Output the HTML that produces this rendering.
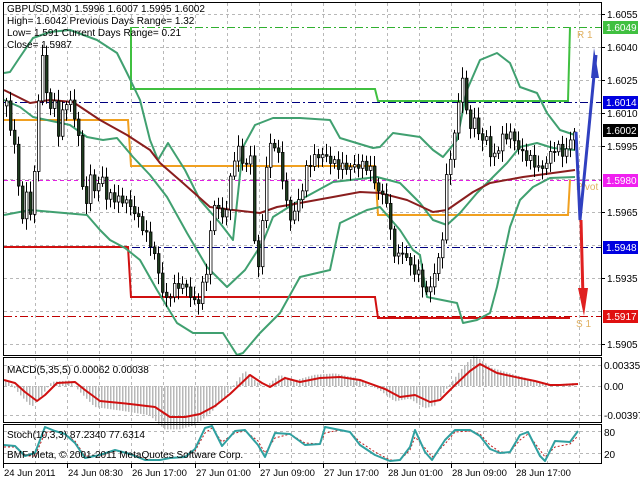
<!DOCTYPE html>
<html><head><meta charset="utf-8"><style>
html,body{margin:0;padding:0;background:#fff;width:640px;height:480px;overflow:hidden}
svg{display:block;font-family:"Liberation Sans",sans-serif;font-size:10px}
</style></head><body>
<svg id="s" width="640" height="480" xmlns="http://www.w3.org/2000/svg">
<rect width="640" height="480" fill="#fff"/>
<g id="grid" stroke="#b8b8b8" stroke-dasharray="3,3" stroke-width="1"></g>
<g id="lv"></g>
<g fill="none" stroke-width="2" stroke-linejoin="round">
<polyline stroke="#40a070" points="4,73 10,72 20,57 33,38 50,32 70,30 97,40 117,53 127,73 140,100 150,140 158,160 168,143 185,170 200,200 220,223 233,240 243,147 255,125 273,118 300,118 330,120 340,138 373,148 380,147 393,133 420,137 433,150 443,157 457,140 467,90 480,60 497,53 510,63 520,87 537,93 547,113 560,130 575,135"/>
<polyline stroke="#40a070" points="4,100 20,107 33,117 47,120 70,125 87,137 103,140 117,138 133,157 150,175 167,197 187,233 207,267 227,287 245,270 263,242 273,217 300,200 333,182 377,177 400,183 420,203 433,220 447,225 460,213 477,193 490,180 507,163 520,147 537,143 553,148 575,150"/>
<polyline stroke="#40a070" points="4,215 30,210 87,215 100,230 110,240 125,248 140,260 157,290 177,323 193,333 223,333 237,355 243,353 260,333 280,313 300,277 330,270 340,223 367,210 380,207 400,230 413,250 420,255 427,297 457,303 463,323 477,320 490,313 497,287 510,227 520,200 533,187 550,178 575,177"/>
<polyline stroke="#8a1e1e" points="4,90 30,103 50,100 73,102 100,120 127,135 150,150 160,163 183,183 210,207 233,210 260,213 277,207 300,203 333,197 360,192 380,193 407,200 433,212 447,210 473,192 490,183 523,177 553,173 575,170"/>
</g>
<g id="cd"></g>
<g id="ar"></g>
<g id="mac"></g>
<g fill="none" stroke-linejoin="round">
<polyline stroke="#d01010" stroke-width="2" points="4,380 15,383 25,392 37,401 45,395 57,383 75,382 85,390 100,401 130,404 155,407 170,417 185,417 200,414 215,406 230,394 250,375 262,383 270,387 285,378 300,382 320,378 340,377 360,380 385,389 400,397 415,395 430,402 440,400 455,385 470,371 480,364 497,373 520,378 535,381 550,385 560,385 578,384"/>
<polyline stroke="#c02020" stroke-dasharray="2,2" points="4,447 15,447 25,456 35,456 45,433 55,431 65,434 75,441 85,456 100,456 115,451 130,453 145,459 160,460 170,458 185,457 195,451 205,433 212,428 222,442 235,433 245,431 258,441 265,453 275,438 290,434 305,443 320,444 325,433 340,430 350,432 360,442 375,452 390,460 400,460 410,450 415,437 425,448 432,457 445,444 455,432 470,431 480,434 490,445 500,452 510,452 520,440 528,434 540,450 545,457 555,447 570,444 578,436"/>
<polyline stroke="#30a0a0" stroke-width="2" points="4,445 15,446 25,456 35,453 45,427 55,431 65,434 75,443 85,458 100,455 115,450 130,454 145,460 160,460 170,458 185,457 195,449 205,428 212,426 222,446 235,431 245,430 258,445 265,457 275,433 290,434 305,445 320,444 325,427 340,430 350,432 360,445 375,455 390,461 400,460 410,447 415,430 425,452 432,460 445,440 455,430 470,430 480,436 490,449 500,453 510,452 520,435 528,432 540,456 545,461 555,441 570,442 578,431"/>
</g>
<g fill="none" stroke="#000" stroke-width="1">
<rect x="3.5" y="2.5" width="598" height="353"/>
<rect x="3.5" y="357.5" width="598" height="65"/>
<rect x="3.5" y="424.5" width="598" height="39"/>
</g>
<g fill="#000">
<text x="7" y="12">GBPUSD,M30  1.5996 1.6007 1.5995 1.6002</text>
<text x="7" y="24">High= 1.6042    Previous Days Range= 1.32</text>
<text x="7" y="36">Low= 1.591    Current Days Range= 0.21</text>
<text x="7" y="48">Close= 1.5987</text>
<text x="7" y="373">MACD(5,35,5) 0.00062 0.00038</text>
<text x="7" y="438">Stoch(10,3,3) 87.2340 77.6314</text>
<text x="7" y="458">BMF-Meta, © 2001-2011 MetaQuotes Software Corp.</text>
</g>
<g id="ax" fill="#000"></g>
</svg>
<script>
(function(){
var NS="http://www.w3.org/2000/svg";
function el(p,t,a,txt){var e=document.createElementNS(NS,t);for(var k in a)e.setAttribute(k,a[k]);if(txt!=null)e.textContent=txt;document.getElementById(p).appendChild(e);return e;}
for(var i=0;i<11;i++){var y=14+33*i;el("grid","line",{x1:4,x2:601,y1:y+.5,y2:y+.5});}
for(var x=35;x<=580;x+=32){el("grid","line",{x1:x+.5,x2:x+.5,y1:3,y2:355});el("grid","line",{x1:x+.5,x2:x+.5,y1:358,y2:422});el("grid","line",{x1:x+.5,x2:x+.5,y1:425,y2:463});}
[365,386,415].forEach(function(y){el("grid","line",{x1:4,x2:601,y1:y+.5,y2:y+.5});});
[431,453].forEach(function(y){el("grid","line",{x1:4,x2:601,y1:y+.5,y2:y+.5});});
var K=[[5,100],[10,130],[15,160],[20,230],[25,200],[30,220],[35,150],[38,70],[42,50],[47,110],[52,90],[57,130],[62,110],[67,100],[72,120],[77,140],[80,190],[85,200],[90,170],[95,190],[100,165],[105,195],[110,195],[115,205],[120,205],[130,210],[140,220],[150,240],[155,260],[160,290],[165,305],[175,290],[185,285],[195,300],[205,270],[210,225],[215,200],[220,230],[225,210],[232,160],[238,140],[243,170],[248,135],[255,275],[258,270],[263,190],[268,150],[275,150],[280,170],[285,200],[290,215],[295,200],[300,190],[305,170],[310,165],[320,160],[330,160],[340,160],[350,165],[360,170],[370,175],[375,190],[385,195],[390,235],[395,255],[400,250],[405,260],[410,275],[418,280],[425,295],[430,280],[435,260],[440,245],[445,175],[450,150],[455,130],[460,70],[463,110],[468,130],[475,120],[480,140],[485,130],[490,155],[495,150],[500,140],[510,140],[515,150],[520,155],[530,155],[535,160],[540,165],[545,160],[555,150],[560,160],[565,155],[572,132]];
function ip(P,x){for(var i=0;i<P.length-1;i++){if(x<=P[i+1][0]){var a=P[i],b=P[i+1];var t=(x-a[0])/(b[0]-a[0]);return a[1]+t*(b[1]-a[1]);}}return P[P.length-1][1];}
var xs=[],cy=[];for(var x=5;x<=573;x+=4){xs.push(x);cy.push(ip(K,x)+6*Math.sin(x*1.7)+4*Math.sin(x*0.9));}
cy[cy.length-1]=132;
var prev=cy[0]+5;
for(var i=0;i<xs.length;i++){var o=prev,c=cy[i];var hi=Math.min(o,c)-3-Math.abs(8*Math.sin(i*2.3)),lw=Math.max(o,c)+3+Math.abs(8*Math.cos(i*1.9));
el("cd","line",{x1:xs[i]+1.5,x2:xs[i]+1.5,y1:hi,y2:lw,stroke:"#000","stroke-width":1});
var by=Math.min(o,c),bh=Math.max(1,Math.abs(c-o));
el("cd","rect",{x:xs[i]+.5,y:by,width:2.5,height:bh,fill:c>o?"#1e3c1e":"#fff",stroke:"#000","stroke-width":.8});prev=c;}
// MACD histogram from signal shape
var S=[[4,380],[15,383],[25,392],[37,401],[45,395],[57,383],[75,382],[85,390],[100,401],[130,404],[155,407],[170,417],[185,417],[200,414],[215,406],[230,394],[250,375],[262,383],[270,387],[285,378],[300,382],[320,378],[340,377],[360,380],[385,389],[400,397],[415,395],[430,402],[440,400],[455,385],[470,371],[480,364],[497,373],[520,378],[535,381],[550,385],[560,385],[578,384]];
for(var x=5;x<=573;x+=3){var v=(ip(S,x+6)-386)*1.4;var y0=386;el("mac","rect",{x:x,y:Math.min(y0,y0+v),width:1.5,height:Math.max(.5,Math.abs(v)),fill:"#b8b8b8"});}
function hl(y,c,da,x1){el("lv","line",{x1:x1||4,x2:601,y1:y+.5,y2:y+.5,stroke:c,"stroke-dasharray":da});}
hl(27,"#30b030","8,3,2,3",131);hl(102,"#000080","8,3,2,3");hl(180,"#e020e0","4,3");hl(247,"#000080","8,3,2,3");hl(316,"#c00000","8,3,2,3");
el("lv","polyline",{points:"131,27 131,89 375,89 378,101 568,101 570,27",fill:"none",stroke:"#40c040","stroke-width":2});
el("lv","polyline",{points:"4,120 128,120 131,166 375,166 378,215 568,215 570,180",fill:"none",stroke:"#f0a020","stroke-width":2});
el("lv","polyline",{points:"4,247 128,247 131,297 375,297 378,318 570,318",fill:"none",stroke:"#d01010","stroke-width":2});
el("lv","text",{x:577,y:38,fill:"#e0b060"},"R 1");el("lv","text",{x:576,y:190,fill:"#e0b060"},"Pivot");el("lv","text",{x:576,y:327,fill:"#e0b060"},"S 1");
el("ar","path",{d:"M576,132 L580,220 L596,55",fill:"none",stroke:"#3040c0","stroke-width":3});
el("ar","path",{d:"M591,78 L594,48 L599,78 Z",fill:"#3040c0"});
el("ar","path",{d:"M581,220 L583,298",fill:"none",stroke:"#e02020","stroke-width":3});
el("ar","path",{d:"M578,288 L584,316 L588,288 Z",fill:"#e02020"});
[["1.6055",14],["1.6040",47],["1.6025",80],["1.6010",113],["1.5995",146],["1.5965",212],["1.5935",278],["1.5905",344]].forEach(function(a){el("ax","line",{x1:601,x2:605,y1:a[1]+.5,y2:a[1]+.5,stroke:"#000"});el("ax","text",{x:607,y:a[1]+4},a[0]);});
[["1.6049",27,"#40c040"],["1.6014",102,"#0000e0"],["1.6002",130,"#000"],["1.5980",180,"#f020f0"],["1.5948",247,"#0000e0"],["1.5917",316,"#e01010"]].forEach(function(a){el("ax","rect",{x:603,y:a[1]-6,width:35,height:13,fill:a[2]});el("ax","text",{x:606,y:a[1]+4,fill:"#fff"},a[0]);});
[["0.00335",369],["0.00",390],["-0.00397",419],["80",436],["20",458]].forEach(function(a){el("ax","text",{x:604,y:a[1]},a[0]);});
["24 Jun 2011","24 Jun 08:30","26 Jun 17:00","27 Jun 01:00","27 Jun 09:00","27 Jun 17:00","28 Jun 01:00","28 Jun 09:00","28 Jun 17:00"].forEach(function(t,i){var x=3+64*i;el("ax","line",{x1:x+.5,x2:x+.5,y1:464,y2:468,stroke:"#000"});el("ax","text",{x:x+1,y:476,"font-size":"9.5"},t);});
})();
</script>
</body></html>
